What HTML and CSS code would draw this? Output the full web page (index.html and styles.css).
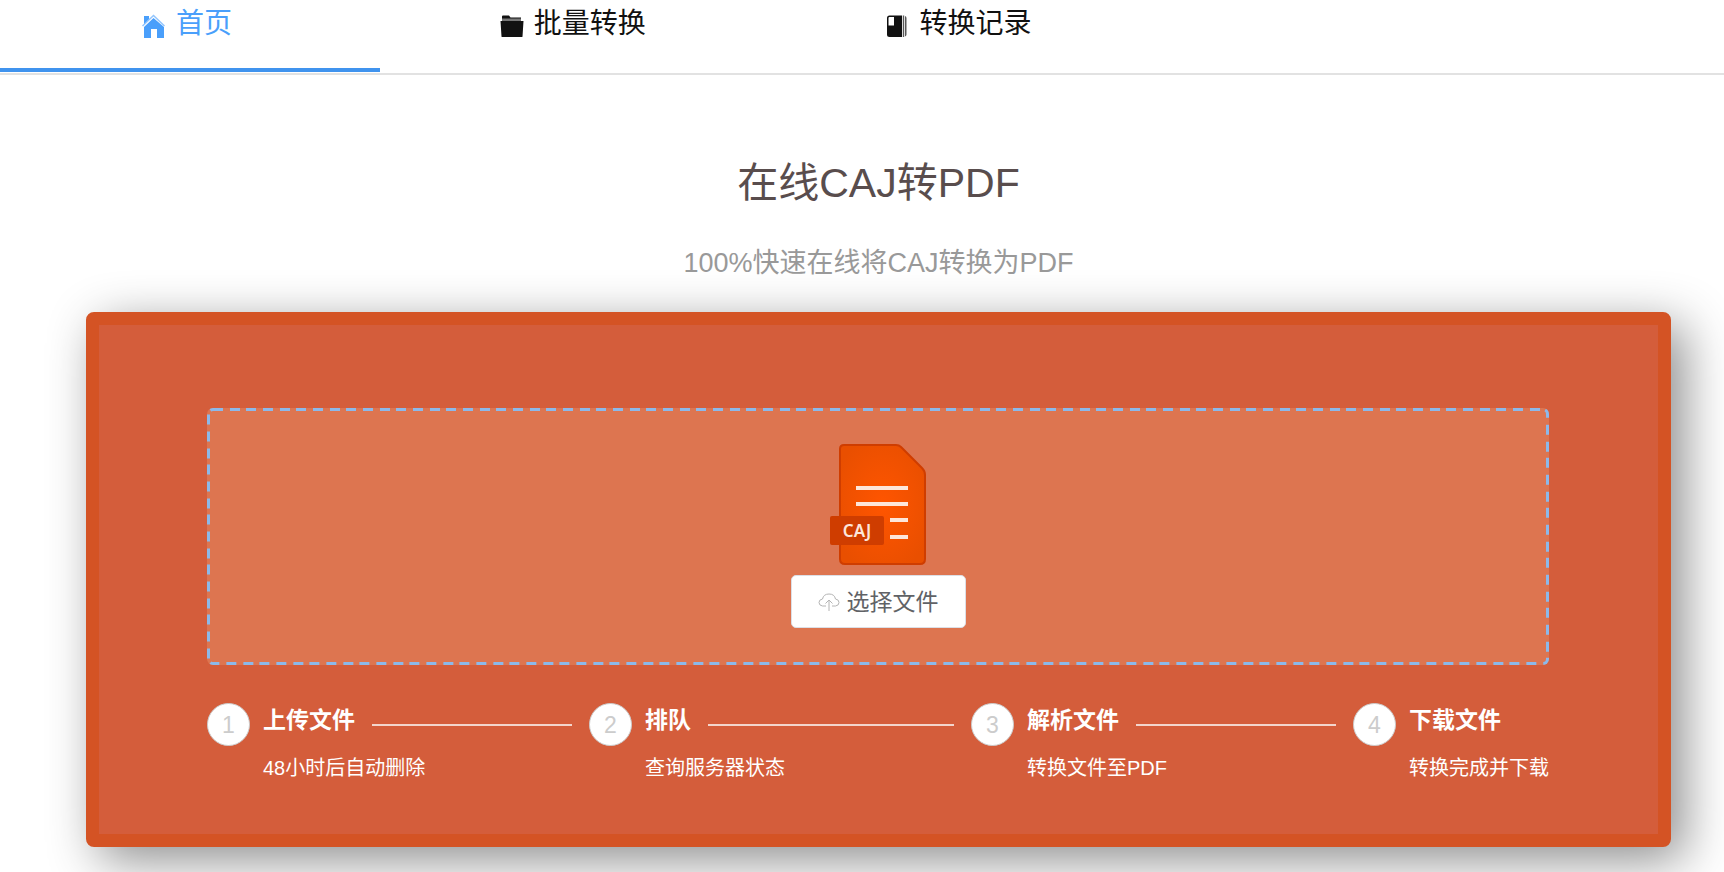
FILE: index.html
```html
<!DOCTYPE html>
<html lang="zh-CN">
<head>
  <meta charset="UTF-8" />
  <meta name="viewport" content="width=device-width, initial-scale=1.0" />
  <title>在线CAJ转PDF</title>

  <link rel="stylesheet" href="styles.css">
</head>
<body>
<nav>
  <a href="#" class="tab active">
    <svg class="tab-icon home" viewBox="0 0 24 24" fill="currentColor">
      <path d="M2 2h5v3L2 10z" />
      <path d="M0 11.500L11.500 0.500 23 11.500 22 12.500 11.500 2.500 1 12.500z" opacity="0.6" />
      <path d="M11.500 4L22 13v11h-7v-9H9v9H2V13z" />
    </svg>
    <span>首页</span>
  </a>
  <a href="#" class="tab">
    <svg class="tab-icon" viewBox="0 0 24 24" fill="currentColor">
      <path d="M2 2.500Q2 1.500 3 1.500h6l1.500 2H21v2.500H2z" />
      <path d="M2 4.500h19V7H2z" fill="#777" />
      <path d="M.5 7h23l-1 15.500q0 .5-1 .5h-19q-1 0-1-.5z" />
    </svg>
    <span>批量转换</span>
  </a>
  <a href="#" class="tab">
    <svg class="tab-icon" viewBox="0 0 24 24" fill="currentColor">
      <path fill-rule="evenodd" d="M4.500 1.500H17V23H4.500Q2 23 2 20.500V4Q2 1.500 4.500 1.500zM4.500 3Q3.500 3 3.500 4v7.500H9V3z" />
      <path d="M17.800 1.500h1.400V23h-1.400zM20 2q1.500.3 1.500 2v16.500q0 1.500-1.500 2z" opacity="0.7" />
    </svg>
    <span>转换记录</span>
  </a>
</nav>

<main>
  <h1>在线CAJ转PDF</h1>
  <p class="subtitle">100%快速在线将CAJ转换为PDF</p>

  <section class="card">
    <!-- Upload area -->
    <div class="upload">
      <svg class="upload-border"><rect width="100%" height="100%" rx="6" /></svg>
      <svg class="file-icon" viewBox="0 0 96 121">
        <defs>
          <radialGradient id="paper" cx="50%" cy="50%" r="60%">
            <stop offset="0" stop-color="#ff5500" />
            <stop offset="1" stop-color="#e94f00" />
          </radialGradient>
        </defs>
        <path d="M14 1H66Q69 1 71 3L92 24Q95 27 95 31V115Q95 120 90 120H15Q10 120 10 115V5Q10 1 14 1z" fill="url(#paper)" stroke="#cf3d00" stroke-width="2" />
        <path d="M26 44H78M26 60H78M60 76H78M60 93H78" stroke="#fde6da" stroke-width="4" />
        <rect y="72" width="54" height="29" rx="2" fill="#cf3d00" />
        <text x="27" y="93" text-anchor="middle" class="file-label">CAJ</text>
      </svg>
      <button type="button" class="choose">
        <svg class="cloud-icon" viewBox="0 0 22 20" fill="none" stroke="currentColor">
          <path d="M8 14H4.500Q1 13.500 1 10.500 1 7.500 4.500 7 5.500 2 11 2t6.500 5Q21 7.500 21 10.500 21 13.500 17.500 14H14M11 19V8M7.500 11.500L11 8l3.500 3.500" />
        </svg>
        <span>选择文件</span>
      </button>
    </div>

    <!-- Conversion steps -->
    <ol class="steps">
      <li class="step">
        <span class="number">1</span>
        <div class="step-body">
          <div class="step-head"><h2>上传文件</h2></div>
          <p>48小时后自动删除</p>
        </div>
      </li>
      <li class="step">
        <span class="number">2</span>
        <div class="step-body">
          <div class="step-head"><h2>排队</h2></div>
          <p>查询服务器状态</p>
        </div>
      </li>
      <li class="step">
        <span class="number">3</span>
        <div class="step-body">
          <div class="step-head"><h2>解析文件</h2></div>
          <p>转换文件至PDF</p>
        </div>
      </li>
      <li class="step">
        <span class="number">4</span>
        <div class="step-body">
          <div class="step-head"><h2>下载文件</h2></div>
          <p>转换完成并下载</p>
        </div>
      </li>
    </ol>
  </section>
</main>
</body>
</html>
```

FILE: styles.css
```css
* {
  box-sizing: border-box;
}

body {
  font-family: "Liberation Sans", "Noto Sans CJK SC", sans-serif;
  background-color: #fff;
  margin: 0;
  min-height: 100vh;
}

h1,
h2,
p,
ol {
  margin: 0;
  padding: 0;
  font-weight: normal;
}

nav {
  display: flex;
  margin-left: -6px;
  border-bottom: 2px solid #e2e2e2;
}

.tab {
  flex: 0 0 22.3%;
  display: flex;
  align-items: center;
  justify-content: center;
  gap: 10px;
  padding: 4px 0 24px;
  border-bottom: 4px solid transparent;
  margin-bottom: 1px;
  font-size: 28px;
  line-height: 40px;
  color: #111;
  text-decoration: none;
}

.tab.active {
  color: #4a9ffb;
  border-bottom-color: #4093ee;
}

.tab-icon {
  width: 24px;
  height: 24px;
  margin-top: 4px;
}

main {
  padding: 78px 53px 24px 86px;
  text-align: center;
}

h1 {
  font-size: 41px;
  line-height: 60px;
  color: #594d4d;
}

.subtitle {
  margin-top: 30px;
  font-size: 27px;
  line-height: 40px;
  color: #999;
}

.card {
  margin-top: 29px;
  padding: 83px 109px 52px 108px;
  border: 13px solid #d45324;
  border-radius: 8px;
  background-color: #d45d3b;
  box-shadow: 13px 13px 50px rgba(0, 0, 0, 0.45);
}

.upload {
  position: relative;
  display: flex;
  flex-direction: column;
  align-items: center;
  gap: 10px;
  padding: 36px 0 37px;
  border-radius: 6px;
  background-color: #dd7550;
}

/* dashed frame, the outer half of the stroke is clipped */
.upload-border {
  position: absolute;
  inset: 0;
  width: 100%;
  height: 100%;
  border-radius: 6px;
  fill: none;
  stroke: #8cb9ea;
  stroke-width: 6px;
  stroke-dasharray: 10 7 10 6 10 7;
  pointer-events: none;
}

.file-icon {
  width: 96px;
  height: 121px;
}

.file-label {
  font-family: "Noto Sans", sans-serif;
  font-size: 17px;
  font-weight: 600;
  fill: #fde6da;
}

.choose {
  display: flex;
  align-items: center;
  gap: 7px;
  height: 53px;
  padding: 0 26px;
  border: 1px solid #dcdfe6;
  border-radius: 5px;
  background-color: #fff;
  font-family: inherit;
  font-size: 23px;
  line-height: 34px;
  color: #606266;
  cursor: pointer;
}

.cloud-icon {
  width: 22px;
  height: 20px;
  color: #b4b4b4;
}

.steps {
  display: flex;
  margin-top: 38px;
  list-style: none;
  color: #fff;
  text-align: left;
}

.step {
  flex: 1;
  display: flex;
  align-items: flex-start;
  gap: 13px;
}

.step:last-child {
  flex: none;
}

.number {
  flex: none;
  width: 43px;
  height: 43px;
  border: 1px solid #ccc;
  border-radius: 50%;
  background-color: #fff;
  color: #ccc;
  font-size: 23px;
  line-height: 42px;
  text-align: center;
}

.step-body {
  flex: 1;
}

.step-head {
  display: flex;
  align-items: center;
  gap: 17px;
  height: 43px;
}

.step-head h2 {
  align-self: flex-start;
  font-size: 23px;
  font-weight: bold;
  line-height: 34px;
}

.step:not(:last-child) .step-head::after {
  content: "";
  flex: 1;
  height: 2px;
  margin-right: 17px;
  background-color: #f3d5cc;
}

.step p {
  margin-top: 8px;
  font-size: 20px;
  line-height: 28px;
}
```
